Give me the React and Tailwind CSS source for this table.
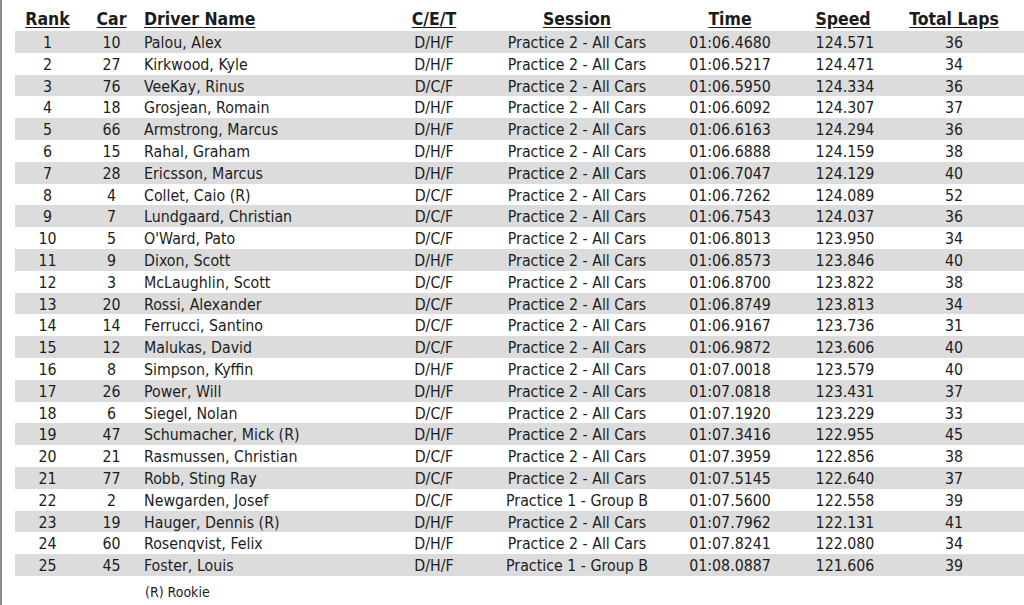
import React from 'react';

const rows = [
  [1, 10, 'Palou, Alex', 'D/H/F', 'Practice 2 - All Cars', '01:06.4680', '124.571', 36],
  [2, 27, 'Kirkwood, Kyle', 'D/H/F', 'Practice 2 - All Cars', '01:06.5217', '124.471', 34],
  [3, 76, 'VeeKay, Rinus', 'D/C/F', 'Practice 2 - All Cars', '01:06.5950', '124.334', 36],
  [4, 18, 'Grosjean, Romain', 'D/H/F', 'Practice 2 - All Cars', '01:06.6092', '124.307', 37],
  [5, 66, 'Armstrong, Marcus', 'D/H/F', 'Practice 2 - All Cars', '01:06.6163', '124.294', 36],
  [6, 15, 'Rahal, Graham', 'D/H/F', 'Practice 2 - All Cars', '01:06.6888', '124.159', 38],
  [7, 28, 'Ericsson, Marcus', 'D/H/F', 'Practice 2 - All Cars', '01:06.7047', '124.129', 40],
  [8, 4, 'Collet, Caio (R)', 'D/C/F', 'Practice 2 - All Cars', '01:06.7262', '124.089', 52],
  [9, 7, 'Lundgaard, Christian', 'D/C/F', 'Practice 2 - All Cars', '01:06.7543', '124.037', 36],
  [10, 5, "O'Ward, Pato", 'D/C/F', 'Practice 2 - All Cars', '01:06.8013', '123.950', 34],
  [11, 9, 'Dixon, Scott', 'D/H/F', 'Practice 2 - All Cars', '01:06.8573', '123.846', 40],
  [12, 3, 'McLaughlin, Scott', 'D/C/F', 'Practice 2 - All Cars', '01:06.8700', '123.822', 38],
  [13, 20, 'Rossi, Alexander', 'D/C/F', 'Practice 2 - All Cars', '01:06.8749', '123.813', 34],
  [14, 14, 'Ferrucci, Santino', 'D/C/F', 'Practice 2 - All Cars', '01:06.9167', '123.736', 31],
  [15, 12, 'Malukas, David', 'D/C/F', 'Practice 2 - All Cars', '01:06.9872', '123.606', 40],
  [16, 8, 'Simpson, Kyffin', 'D/H/F', 'Practice 2 - All Cars', '01:07.0018', '123.579', 40],
  [17, 26, 'Power, Will', 'D/H/F', 'Practice 2 - All Cars', '01:07.0818', '123.431', 37],
  [18, 6, 'Siegel, Nolan', 'D/C/F', 'Practice 2 - All Cars', '01:07.1920', '123.229', 33],
  [19, 47, 'Schumacher, Mick (R)', 'D/H/F', 'Practice 2 - All Cars', '01:07.3416', '122.955', 45],
  [20, 21, 'Rasmussen, Christian', 'D/C/F', 'Practice 2 - All Cars', '01:07.3959', '122.856', 38],
  [21, 77, 'Robb, Sting Ray', 'D/C/F', 'Practice 2 - All Cars', '01:07.5145', '122.640', 37],
  [22, 2, 'Newgarden, Josef', 'D/C/F', 'Practice 1 - Group B', '01:07.5600', '122.558', 39],
  [23, 19, 'Hauger, Dennis (R)', 'D/H/F', 'Practice 2 - All Cars', '01:07.7962', '122.131', 41],
  [24, 60, 'Rosenqvist, Felix', 'D/H/F', 'Practice 2 - All Cars', '01:07.8241', '122.080', 34],
  [25, 45, 'Foster, Louis', 'D/H/F', 'Practice 1 - Group B', '01:08.0887', '121.606', 39],
];

const cols = 'grid grid-cols-[65px_63px_237px_108px_178px_128px_98px_118px]';

export default function App() {
  return (
    <div
      className="w-[1024px] h-[605px] bg-white border-l-2 border-[#8a8a8a] pl-[13px] text-[#1c1c1c] overflow-hidden"
      style={{ fontFamily: '"DejaVu Sans Condensed", "DejaVu Sans", sans-serif' }}
    >
      {/* header */}
      <div className={`${cols} h-[31px] items-end pb-[3px] text-[17.5px] font-bold leading-none`}>
        <span className="text-center underline underline-offset-2">Rank</span>
        <span className="text-center underline underline-offset-2">Car</span>
        <span className="pl-[1px] underline underline-offset-2">Driver Name</span>
        <span className="text-center underline underline-offset-2">C/E/T</span>
        <span className="text-center underline underline-offset-2">Session</span>
        <span className="text-center underline underline-offset-2">Time</span>
        <span className="text-center underline underline-offset-2">Speed</span>
        <span className="text-center pl-[6px] underline underline-offset-2">Total Laps</span>
      </div>

      {/* rows */}
      <div className="flex flex-col text-[15.8px]">
        {rows.map((r, i) => (
          <div
            key={r[0]}
            className={`${cols} h-[21.8px] items-center ${i % 2 === 0 ? 'bg-[#dcdcdc]' : 'bg-white'}`}
          >
            <span className="text-center">{r[0]}</span>
            <span className="text-center">{r[1]}</span>
            <span className="pl-[1px]">{r[2]}</span>
            <span className="text-center">{r[3]}</span>
            <span className="text-center">{r[4]}</span>
            <span className="text-center">{r[5]}</span>
            <span className="text-center pl-[4px]">{r[6]}</span>
            <span className="text-center pl-[6px]">{r[7]}</span>
          </div>
        ))}
      </div>

      <div className="pl-[130px] pt-[6px] text-[14px]">(R) Rookie</div>
    </div>
  );
}
